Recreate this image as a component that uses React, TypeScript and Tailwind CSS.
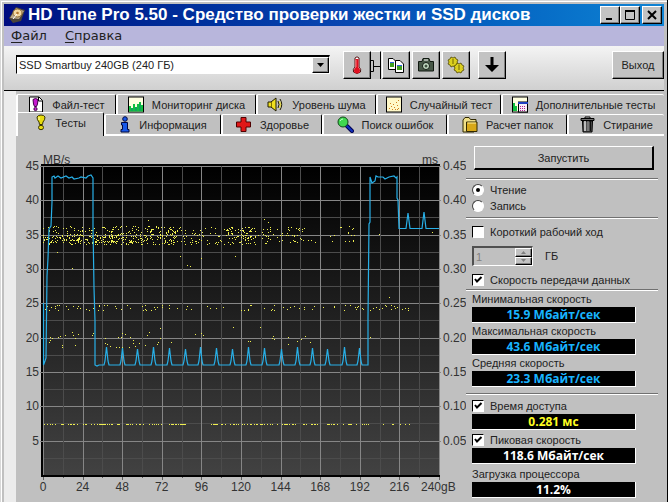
import React from "react";

const raised =
  "bg-[#c3c3c3] border border-t-white border-l-white border-r-black border-b-black shadow-[inset_-1px_-1px_#808080]";

function AppIcon() {
  return (
    <svg width="18" height="18" viewBox="0 0 18 18" className="shrink-0">
      <path d="M1 12 L8 1 L17 4 L13 15 L5 17 Z" fill="#4a4438" />
      <path d="M2 12 L8 2 L16 5 L11 13 Z" fill="#b9a98c" />
      <ellipse cx="9.5" cy="7" rx="4.5" ry="4" fill="#f3d9a0" stroke="#8a6a34" />
      <circle cx="9.5" cy="7" r="1.3" fill="#b07830" />
      <path d="M5 13 L9 8" stroke="#fff" />
    </svg>
  );
}

const tabIcons: Record<string, React.ReactNode> = {
  file: (
    <svg width="16" height="17" viewBox="0 0 16 17">
      <path d="M1.5 1 H11 L14.5 4.5 V16 H1.5 Z" fill="#fff" stroke="#000" />
      <path d="M10.5 1 V5 H14.5" fill="none" stroke="#000" />
      <path d="M5 3.5 Q7.5 1.5 10 3.5 L9.5 8 L8.5 10.5 H6.5 L5.5 8 Z" fill="#c818d0" stroke="#400048" />
      <circle cx="7.5" cy="13" r="1.6" fill="#c818d0" stroke="#400048" />
    </svg>
  ),
  monitor: (
    <svg width="16" height="17" viewBox="0 0 16 17">
      <rect x="0.5" y="1" width="15" height="15" fill="#ffffe0" stroke="#000" />
      <path d="M1 15.500 V10 H3 V12 H5 V8 H7 V11 H9 V8 H11 V6 H13 V9 H15 V15.500 Z" fill="#10c040" />
      <path d="M4 15 V12 M8 15 V11 M12 15 V8" stroke="#108878" />
    </svg>
  ),
  noise: (
    <svg width="17" height="17" viewBox="0 0 17 17">
      <path d="M1 6 H4 L9 2 V15 L4 11 H1 Z" fill="#f0e020" stroke="#201c00" />
      <path d="M4.500 6 V11" stroke="#807000" />
      <path d="M11 5 Q13 8.500 11 12 M13 3 Q16.500 8.500 13 14" fill="none" stroke="#201c00" />
      <path d="M12.500 5 Q14.500 8.500 12.500 12" fill="none" stroke="#f0e020" />
    </svg>
  ),
  random: (
    <svg width="16" height="17" viewBox="0 0 16 17">
      <rect x="0.5" y="1" width="15" height="15" fill="#fff8c8" stroke="#000" />
      <g shapeRendering="crispEdges" fill="#d08020">
        {[[3, 12], [5, 10], [6, 13], [8, 11], [9, 13], [11, 9], [12, 12], [4, 7], [10, 6], [12, 4], [7, 8], [11, 13]].map(([x, y]) => (
          <rect key={`${x}-${y}`} x={x} y={y} width="1" height="1" />
        ))}
      </g>
    </svg>
  ),
  extra: (
    <svg width="16" height="17" viewBox="0 0 16 17">
      <rect x="0.5" y="1" width="15" height="15" fill="#ffffe0" stroke="#000" />
      <path d="M1 15 V7 H3 V10 H5 V15 Z" fill="#10c040" />
      <rect x="6.5" y="6" width="9" height="10" fill="#f8f0f8" stroke="#000" />
      <path d="M6 7 H16" stroke="#2040c0" strokeWidth="2" />
      <path d="M8 10.500h1M10 10.500h1M12 10.500h1M8 12.500h1M10 12.500h1M12 12.500h1M8 14.500h1M10 14.500h1M12 14.500h1" stroke="#b02090" />
    </svg>
  ),
  tests: (
    <svg width="12" height="17" viewBox="0 0 12 17">
      <path d="M2 3 Q3 1 6 1 Q9 1 10 3 Q10 6 8 8 L7.500 10.500 H4.500 L4 8 Q2 6 2 3 Z" fill="#e8dc10" stroke="#383400" />
      <path d="M4 3 V6" stroke="#ffffc0" />
      <ellipse cx="6" cy="13.500" rx="2.500" ry="2.200" fill="#e8dc10" stroke="#383400" />
    </svg>
  ),
  info: (
    <svg width="12" height="17" viewBox="0 0 12 17">
      <circle cx="6" cy="3" r="2.300" fill="#1858e8" stroke="#000840" />
      <path d="M2.500 6.500 H8.500 V13.500 H10 V16 H2 V13.500 H3.500 V9 H2.500 Z" fill="#1858e8" stroke="#000840" />
    </svg>
  ),
  health: (
    <svg width="17" height="17" viewBox="0 0 17 17">
      <path d="M6 1.500 H11 V6 H15.500 V11 H11 V15.500 H6 V11 H1.500 V6 H6 Z" fill="#e01818" stroke="#500000" />
    </svg>
  ),
  search: (
    <svg width="17" height="17" viewBox="0 0 17 17">
      <path d="M10 10 L15 15" stroke="#000050" strokeWidth="4" strokeLinecap="round" />
      <path d="M10 10 L15 15" stroke="#1030c0" strokeWidth="2" strokeLinecap="round" />
      <circle cx="6" cy="6" r="5" fill="#40d850" stroke="#104818" />
      <path d="M3 5 Q4 3 6 3" fill="none" stroke="#c8ffd0" />
    </svg>
  ),
  folder: (
    <svg width="16" height="17" viewBox="0 0 16 17">
      <path d="M1 4 L3 1.500 H7 L8.500 3.500 H14 V14 L12 16 H1 Z" fill="#f0e088" stroke="#302800" />
      <path d="M4.500 6 H15 V15.500 H4.500 Z" fill="#d8a818" stroke="#302800" />
      <path d="M5.500 7 H14" stroke="#fff0a0" />
    </svg>
  ),
  trash: (
    <svg width="15" height="17" viewBox="0 0 15 17">
      <path d="M1 2.500 H14 V4.500 H1 Z" fill="#707070" stroke="#000" />
      <path d="M5 2 V1 H10 V2" fill="none" stroke="#000" />
      <path d="M2.500 5 H12.500 L12 16 H3 Z" fill="#505050" stroke="#000" />
      <path d="M5 5 V15" stroke="#e0e0e0" strokeWidth="1.500" />
      <path d="M8 5 V15" stroke="#a0a0a0" />
      <path d="M10.500 5 V15" stroke="#101010" />
    </svg>
  ),
};

function Tab({ icon, label, active = false }: { icon: string; label: string; active?: boolean }) {
  return (
    <button
      type="button"
      role="tab"
      aria-selected={active}
      className={`flex min-w-0 items-center justify-center gap-2 whitespace-nowrap rounded-t-xs border-t border-l-2 border-white border-r border-r-black bg-[#c0c0c0] last:border-r-0 ${
        active ? "-mt-0.5 -mb-0.5 pb-1" : ""
      }`}
    >
      <span className="shrink-0">{tabIcons[icon]}</span>
      <span>{label}</span>
    </button>
  );
}

function ToolButton({ label, children }: { label: string; children: React.ReactNode }) {
  return (
    <button type="button" aria-label={label} className={`flex h-7 w-7 items-center justify-center ${raised}`}>
      {children}
    </button>
  );
}

/* ---------- chart ---------- */

const X0 = 27;
const Y0 = 339;
const PX_PER_GB = 1.65;
const PX_PER_MB = 6.87;

function random(seed: number) {
  let s = seed;
  return () => {
    s = (s * 1664525 + 1013904223) % 4294967296;
    return s / 4294967296;
  };
}

function accessDots() {
  const r = random(77);
  const dots: [number, number][] = [];
  const band = (n: number, x1: number, x2: number, y1: number, y2: number) => {
    for (let i = 0; i < n; i++) {
      dots.push([Math.floor(x1 + r() * (x2 - x1)), Math.floor(y1 + r() * (y2 - y1))]);
    }
  };
  band(270, 27, 160, 90, 109);
  band(120, 27, 160, 98, 107);
  band(120, 150, 240, 91, 109);
  band(75, 215, 285, 91, 108);
  band(26, 280, 350, 90, 108);
  band(50, 28, 215, 169, 175);
  band(48, 215, 400, 169, 175);
  band(14, 30, 64, 195, 212);
  band(18, 75, 120, 197, 212);
  band(24, 120, 300, 190, 210);
  for (let i = 0; i < 75; i++) dots.push([Math.floor(28 + r() * 150), 288]);
  for (let i = 0; i < 75; i++) dots.push([Math.floor(192 + r() * 144), 288]);
  for (let i = 0; i < 12; i++) dots.push([Math.floor(332 + r() * 80), 288]);
  dots.push([41, 116], [56, 132], [132, 84], [164, 120], [171, 129], [174, 130], [185, 122]);
  dots.push([248, 83], [252, 86], [219, 120], [363, 98], [416, 96], [373, 161], [281, 205], [354, 201]);
  return dots;
}

const spikes = [91, 107, 122, 138, 154, 170, 185, 201, 217, 233, 249, 266, 282, 297, 312, 329, 344];
const speedPath =
  "M27.5 167 V229 L29 225 L30 222 L31 140 L32 122 L33 93 L35 90 L36 66 V41 L38 40 L39 42 L42 40 L45 42 L50 40 L53 42 L56 41 L58 43 L63 42 L65 41 L70 42 L72 40 L75 39 L77 42 V90 L78 152 L79 185 V229 L81 230 L83 229 " +
  spikes.map((x, i) => `H${x - 3} L${x - 2} 225 L${x - 0.5} ${211 + (i % 3)} L${x + 1} 225 L${x + 2} 229`).join(" ") +
  " H352 V182 L353 88 L354 86 V41 L356 47 L359 45 L360 40 L362 41 L367 41 L369 43 L373 41 L378 40 L380 42 L381 41 V62 L382 64 L383 92.500 H390 L392 77 L394 92.500 H406 L408 76 L410 92.500 H423";

function Chart() {
  const xs = Array.from({ length: 21 }, (_, i) => i);
  const ys = Array.from({ length: 19 }, (_, i) => i);
  return (
    <svg
      viewBox="0 0 450 366"
      className="min-w-0 flex-1 self-start font-['Liberation_Sans',Arial,sans-serif] text-[12px]"
      role="img"
      aria-label="MB/s, ms"
    >
      <defs>
        <linearGradient id="plot" x1="0" y1="0" x2="0" y2="1">
          <stop offset="0" stopColor="#000" />
          <stop offset="1" stopColor="#424242" />
        </linearGradient>
      </defs>
      <rect x="25" y="28" width="399" height="313" fill="#000" />
      <rect x="27" y="30" width="396" height="309" fill="url(#plot)" />
      <g shapeRendering="crispEdges">
        {ys.map((i) => (
          <rect
            key={i}
            x={i % 2 ? 27 : 24}
            y={Math.round(Y0 - (i * 5 * PX_PER_MB) / 2)}
            width={i % 2 ? 396 : 401}
            height={i === 0 ? 0 : 1}
            fill={i % 2 ? "#4c4c4c" : "#868686"}
          />
        ))}
        {xs.map((i) => (
          <g key={i}>
            <rect x={Math.round(X0 + i * 12 * PX_PER_GB)} y="30" width="1" height="309" fill={i % 2 ? "#4c4c4c" : "#868686"} />
            <rect x={Math.round(X0 + i * 12 * PX_PER_GB)} y="341" width="1" height={i % 2 ? 1 : 3} fill="#606060" />
          </g>
        ))}
        {accessDots().map(([x, y], i) => (
          <rect key={i} x={x} y={y} width="1" height="1" fill="#f0f050" />
        ))}
      </g>
      <path d={speedPath} fill="none" stroke="#28b0e8" strokeWidth="1.2" />
      <g fill="#333">
        <text x="27" y="28">MB/s</text>
        <text x="422" y="28" textAnchor="end">ms</text>
        {[45, 40, 35, 30, 25, 20, 15, 10, 5].map((v) => (
          <React.Fragment key={v}>
            <text x="23" y={Y0 - v * PX_PER_MB + 4} textAnchor="end">{v}</text>
            <text x="427" y={Y0 - v * PX_PER_MB + 4}>{(v / 100).toFixed(2)}</text>
          </React.Fragment>
        ))}
        {[0, 24, 48, 72, 96, 120, 144, 168, 192, 216].map((v) => (
          <text key={v} x={X0 + v * PX_PER_GB} y="355" textAnchor="middle">{v}</text>
        ))}
        <text x="405" y="355">240gB</text>
      </g>
    </svg>
  );
}

/* ---------- side panel ---------- */

function Rule() {
  return <hr className="h-0.5 border-0 border-t border-b border-t-[#707070] border-b-white" />;
}

function Check({ id, label, checked = false }: { id: string; label: string; checked?: boolean }) {
  return (
    <div className="flex h-4 items-center gap-1.5 pl-1.5">
      <span className="relative flex h-3 w-3">
        <input
          id={id}
          type="checkbox"
          defaultChecked={checked}
          className="peer h-3 w-3 appearance-none border border-t-black border-l-black border-r-white border-b-white bg-white"
        />
        <svg viewBox="0 0 12 12" className="pointer-events-none absolute inset-0 hidden peer-checked:block">
          <path d="M3 5 L5 7.500 L9.500 3" fill="none" stroke="#000" strokeWidth="2" />
        </svg>
      </span>
      <label htmlFor={id}>{label}</label>
    </div>
  );
}

function Radio({ id, label, checked = false }: { id: string; label: string; checked?: boolean }) {
  return (
    <div className="flex h-4 items-center gap-1.5 pl-1.5">
      <span className="relative flex h-3 w-3">
        <input
          id={id}
          type="radio"
          name="mode"
          defaultChecked={checked}
          className="peer h-3 w-3 appearance-none rounded-full border border-t-[#404040] border-l-[#404040] border-r-white border-b-white bg-white"
        />
        <span className="pointer-events-none absolute inset-1 hidden rounded-full bg-black peer-checked:block" />
      </span>
      <label htmlFor={id}>{label}</label>
    </div>
  );
}

function Value({ children, color }: { children: string; color: string }) {
  return (
    <output
      className={`mr-[22px] ml-1.5 flex h-4 items-center justify-center border-r border-b border-white bg-black font-['Open_Sans','Noto_Sans',sans-serif] text-[12px] font-bold ${color}`}
    >
      {children}
    </output>
  );
}

function Caption({ children }: { children: string }) {
  return <div className="flex h-4 items-center pl-1.5">{children}</div>;
}

export default function App() {
  return (
    <div className="flex min-h-screen w-full flex-col overflow-hidden bg-[#c0c0c0] p-1 font-['Liberation_Sans',Arial,sans-serif] text-[11px] leading-4 text-[#222] shadow-[inset_-1px_-1px_#000,inset_1px_1px_#d8d8d8,inset_2px_2px_#fff]">
      <header className="flex h-[22px] items-center gap-0.5 bg-linear-to-r from-[#000c80] via-[#0844b0] to-[#1084d4] pl-1 text-white">
        <AppIcon />
        <h1 className="flex-1 truncate text-[17px] leading-5 font-bold">HD Tune Pro 5.50 - Средство проверки жестки и SSD дисков</h1>
        <div className="flex items-center text-black">
          <button type="button" aria-label="Свернуть" className={`flex h-[18px] w-5 items-center justify-center ${raised}`}>
            <svg width="12" height="12"><path d="M2 10 H8" stroke="#000" strokeWidth="2" /></svg>
          </button>
          <button type="button" aria-label="Развернуть" className={`flex h-[18px] w-5 items-center justify-center ${raised}`}>
            <svg width="12" height="12"><path d="M1.500 1 V10.500 H10.500 V1" fill="none" stroke="#000" /><path d="M1 2 H11" stroke="#000" strokeWidth="2" /></svg>
          </button>
          <button type="button" aria-label="Закрыть" className={`mx-0.5 flex h-[18px] w-5 items-center justify-center ${raised}`}>
            <svg width="12" height="12"><path d="M2 2 L10 10 M10 2 L2 10" stroke="#000" strokeWidth="2" /></svg>
          </button>
        </div>
      </header>

      <nav className="flex h-5 items-center gap-[18px] bg-[#b8b6dc] pl-[7px] font-['DejaVu_Sans',Verdana,sans-serif] text-[13px]">
        <button type="button"><span className="underline underline-offset-2">Ф</span>айл</button>
        <button type="button"><span className="underline underline-offset-2">С</span>правка</button>
      </nav>

      <div className="flex h-[45px] items-start border-b border-black bg-linear-to-b from-[#f4f4f4] to-[#d0d0d0] pt-[5px] pl-3">
        <div className="relative mt-1 h-[19px] w-[314px]">
          <select
            aria-label="Диск"
            className="h-full w-full appearance-none border-t-2 border-l border-r border-b border-t-black border-l-black border-r-white border-b-white bg-white pl-0.5 text-[11px] leading-4"
          >
            <option>SSD Smartbuy 240GB (240 ГБ)</option>
          </select>
          <span className={`pointer-events-none absolute top-0.5 right-px bottom-px flex w-[17px] items-center justify-center ${raised}`}>
            <svg width="7" height="4"><path d="M0 0 H7 L3.500 4 Z" fill="#000" /></svg>
          </span>
        </div>
        <div className="ml-[13px] flex">
          <ToolButton label="Температура">
            <svg width="16" height="20" viewBox="0 0 16 20">
              <path d="M6 3 Q8 0.500 10 3 V12 Q12.500 14 11.500 17 Q8 20 4.500 17 Q3.500 14 6 12 Z" fill="#fff" stroke="#501010" />
              <path d="M8 4 V13" stroke="#e01020" strokeWidth="3" />
              <circle cx="8" cy="15.500" r="3" fill="#e01020" />
              <path d="M7 5 V12" stroke="#ff9090" strokeWidth="0.800" />
            </svg>
          </ToolButton>
          <button type="button" aria-label="Питание" className="flex h-7 w-2.5 items-center border-t border-r border-white border-r-black bg-[#c3c3c3]">
            <svg width="9" height="14"><path d="M0 1.500 H2.500 V12.500 H0 M3 7.500 H9" fill="none" stroke="#000" /></svg>
          </button>
        </div>
        <div className="ml-px flex gap-0.5">
          <ToolButton label="Копировать">
            <svg width="18" height="18" viewBox="0 0 18 18">
              <path d="M1.500 2.500 H6 L8.500 5 V13.500 H1.500 Z" fill="#fff" stroke="#000" />
              <path d="M8.500 4.500 H13 L16.500 8 V16.500 H8.500 Z" fill="#fff" stroke="#000" />
              <rect x="3" y="6" width="4" height="5" fill="#40a020" />
              <rect x="10" y="9" width="5" height="5" fill="#40a020" />
              <path d="M3 6.500 H7 M10 9.500 H15" stroke="#3060e0" />
            </svg>
          </ToolButton>
          <ToolButton label="Снимок">
            <svg width="18" height="16" viewBox="0 0 18 16">
              <path d="M1.500 4.500 H5 L6 1.500 H12 L13 4.500 H16.500 V14 H1.500 Z" fill="#485848" stroke="#101810" />
              <circle cx="9" cy="9" r="3.500" fill="#c8e0c8" stroke="#101810" />
              <circle cx="9" cy="9" r="1.500" fill="#405040" />
              <path d="M7 3 H11" stroke="#fff" />
            </svg>
          </ToolButton>
          <ToolButton label="Настройки">
            <svg width="18" height="18" viewBox="0 0 18 18">
              <g fill="#dcd020" stroke="#504800" strokeWidth="0.800">
                <path d="M1 4 L3 3 L4 1 L6 2 L8 1 L9 3 L11 4 L10 6 L11 8 L9 9 L8 11 L6 10 L4 11 L3 9 L1 8 L2 6 Z" />
                <path d="M7 10 L9 9 L10 7 L12 8 L14 7 L15 9 L17 10 L16 12 L17 14 L15 15 L14 17 L12 16 L10 17 L9 15 L7 14 L8 12 Z" />
              </g>
              <path d="M6 3 V8 M12 9 V14" stroke="#706400" />
            </svg>
          </ToolButton>
        </div>
        <div className="ml-2">
          <ToolButton label="Вниз">
            <svg width="14" height="18" viewBox="0 0 14 18">
              <path d="M5.500 1 H8.500 V9 H14 L7 16 L0 9 H5.500 Z" fill="#000" />
            </svg>
          </ToolButton>
        </div>
        <button type="button" className={`ml-auto h-7 w-[52px] ${raised}`}>Выход</button>
      </div>

      <main className="flex flex-1 flex-col border-l-[12px] border-[#ececec] pt-[3px]">
        <div role="tablist" className="border-b-2 border-white">
          <div className="grid h-5 grid-cols-[100fr_140fr_120fr_125fr_163fr]">
            <Tab icon="file" label="Файл-тест" />
            <Tab icon="monitor" label="Мониторинг диска" />
            <Tab icon="noise" label="Уровень шума" />
            <Tab icon="random" label="Случайный тест" />
            <Tab icon="extra" label="Дополнительные тесты" />
          </div>
          <div className="grid h-5 grid-cols-[88fr_117fr_101fr_125fr_120fr_97fr]">
            <Tab icon="tests" label="Тесты" active />
            <Tab icon="info" label="Информация" />
            <Tab icon="health" label="Здоровье" />
            <Tab icon="search" label="Поиск ошибок" />
            <Tab icon="folder" label="Расчет папок" />
            <Tab icon="trash" label="Стирание" />
          </div>
        </div>

        <div className="flex flex-1">
          <Chart />
          <aside className="flex w-[198px] shrink-0 flex-col pt-2.5 pr-1.5">
            <button
              type="button"
              className="mr-1 ml-2 h-6 border-t border-l border-r-2 border-b-2 border-t-white border-l-white border-r-black border-b-black"
            >
              Запустить
            </button>
            <div className="pt-2"><Rule /></div>
            <div className="pt-0.5 pb-[3px]">
              <Radio id="read" label="Чтение" checked />
              <Radio id="write" label="Запись" />
            </div>
            <Rule />
            <div className="pt-[5px]">
              <Check id="short" label="Короткий рабочий ход" />
              <div className="my-[6px] ml-1.5 flex h-5 items-center gap-3">
                <div className="relative flex h-5 w-[61px]">
                  <input
                    id="size"
                    type="text"
                    defaultValue="1"
                    disabled
                    className="h-5 w-full border-t-2 border-l-2 border-r border-b border-t-[#505050] border-l-[#505050] border-r-white border-b-white bg-[#c0c0c0] pl-0.5 text-[#808080]"
                  />
                  <span className="absolute top-0.5 right-px bottom-px flex w-[17px] flex-col">
                    <span className={`flex flex-1 items-center justify-center ${raised}`}>
                      <svg width="5" height="3"><path d="M0 3 H5 L2.500 0 Z" fill="#808080" /></svg>
                    </span>
                    <span className={`flex flex-1 items-center justify-center ${raised}`}>
                      <svg width="5" height="3"><path d="M0 0 H5 L2.500 3 Z" fill="#808080" /></svg>
                    </span>
                  </span>
                </div>
                <label htmlFor="size">ГБ</label>
              </div>
              <Check id="rate" label="Скорость передачи данных" checked />
            </div>
            <div className="pt-px"><Rule /></div>
            <Caption>Минимальная скорость</Caption>
            <Value color="text-[#18b4ff]">15.9 Мбайт/сек</Value>
            <Caption>Максимальная скорость</Caption>
            <Value color="text-[#18b4ff]">43.6 Мбайт/сек</Value>
            <Caption>Средняя скорость</Caption>
            <Value color="text-[#18b4ff]">23.3 Мбайт/сек</Value>
            <div className="pt-1.5"><Rule /></div>
            <div className="flex flex-col gap-0.5 pt-[3px]">
              <div>
                <Check id="access" label="Время доступа" checked />
                <Value color="text-[#ffff20]">0.281 мс</Value>
              </div>
              <div>
                <Check id="burst" label="Пиковая скорость" checked />
                <Value color="text-white">118.6 Мбайт/сек</Value>
              </div>
              <div>
                <Caption>Загрузка процессора</Caption>
                <Value color="text-white">11.2%</Value>
              </div>
            </div>
          </aside>
        </div>
      </main>
    </div>
  );
}
